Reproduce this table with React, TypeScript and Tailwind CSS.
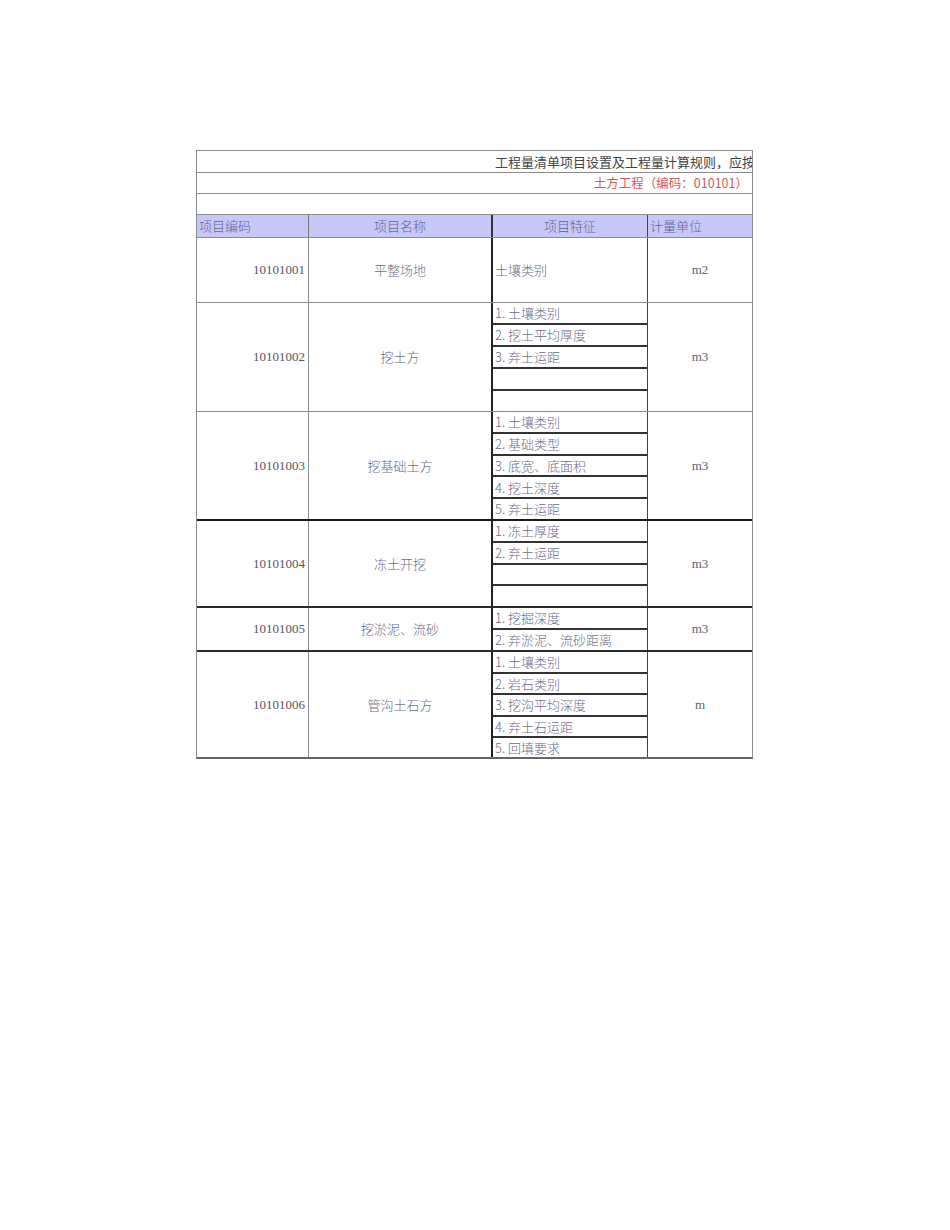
import React from 'react';

type Group = {
  code: string;
  name: string;
  unit: string;
  height: number;
  items: string[];
  single?: boolean;
  topLine: string;
};

const groups: Group[] = [
  { code: '10101001', name: '平整场地', unit: 'm2', height: 65, items: ['土壤类别'], single: true, topLine: 'border-t border-[#8c8c8c]' },
  { code: '10101002', name: '挖土方', unit: 'm3', height: 109, items: ['1. 土壤类别', '2. 挖土平均厚度', '3. 弃土运距', '', ''], topLine: 'border-t border-[#8c8c8c]' },
  { code: '10101003', name: '挖基础土方', unit: 'm3', height: 108, items: ['1. 土壤类别', '2. 基础类型', '3. 底宽、底面积', '4. 挖土深度', '5. 弃土运距'], topLine: 'border-t border-[#8c8c8c]' },
  { code: '10101004', name: '冻土开挖', unit: 'm3', height: 87, items: ['1. 冻土厚度', '2. 弃土运距', '', ''], topLine: 'border-t-2 border-[#1a1a1a]' },
  { code: '10101005', name: '挖淤泥、流砂', unit: 'm3', height: 44, items: ['1. 挖掘深度', '2. 弃淤泥、流砂距离'], topLine: 'border-t-2 border-[#2a2a2a]' },
  { code: '10101006', name: '管沟土石方', unit: 'm', height: 107, items: ['1. 土壤类别', '2. 岩石类别', '3. 挖沟平均深度', '4. 弃土石运距', '5. 回填要求'], topLine: 'border-t-2 border-[#2a2a2a]' },
];

const font = { fontFamily: '"Noto Sans CJK SC", "Liberation Serif", serif' };
const serif = { fontFamily: '"Liberation Serif", serif' };

function GroupRow({ g }: { g: Group }) {
  return (
    <div className={`flex ${g.topLine}`} style={{ height: g.height }}>
      <div className="w-[112px] flex items-center justify-end pr-[3px] text-[13px] text-[#555560] border-r border-[#8c8c8c]" style={serif}>
        {g.code}
      </div>
      <div className="w-[184px] flex items-center justify-center text-[13px] font-light text-[#6c6c88] border-r-2 border-[#222]">
        {g.name}
      </div>
      <div className="w-[155px] flex flex-col border-r border-[#444]">
        {g.single ? (
          <div className="flex-1 flex items-center pl-[2px] text-[13px] font-light text-[#6c6c88]">{g.items[0]}</div>
        ) : (
          g.items.map((t, i) => (
            <div
              key={i}
              className={`flex-1 flex items-center pl-[2px] text-[13px] font-light text-[#6c6c88] ${i < g.items.length - 1 ? 'border-b-2 border-[#333]' : ''}`}
            >
              {t}
            </div>
          ))
        )}
      </div>
      <div className="flex-1 flex items-center justify-center text-[13px] text-[#60606e]" style={serif}>
        {g.unit}
      </div>
    </div>
  );
}

export default function App() {
  return (
    <div className="min-h-[1230px] bg-white pt-[150px] pl-[196px]" style={font}>
      <div className="w-[557px] border border-[#8c8c8c] border-b-2 border-b-[#666]">
        <div className="h-[22px] overflow-hidden whitespace-nowrap pl-[298px] flex items-center text-[13px] text-[#444] border-b border-[#8c8c8c]">
          工程量清单项目设置及工程量计算规则，应按
        </div>
        <div className="h-[21px] flex items-center justify-end pr-[4px] text-[12.5px] text-[#d65a5a] border-b border-[#8c8c8c]">
          土方工程（编码：010101）
        </div>
        <div className="h-[21px] border-b border-[#8c8c8c]" />
        <div className="h-[22px] flex bg-[#c8c8f8] text-[13px] font-light text-[#62629a]">
          <div className="w-[112px] flex items-center pl-[2px] border-r border-[#777]">项目编码</div>
          <div className="w-[184px] flex items-center justify-center border-r-2 border-[#333]">项目名称</div>
          <div className="w-[155px] flex items-center justify-center border-r border-[#444]">项目特征</div>
          <div className="flex-1 flex items-center pl-[2px]">计量单位</div>
        </div>
        {groups.map((g) => (
          <GroupRow key={g.code} g={g} />
        ))}
      </div>
    </div>
  );
}
